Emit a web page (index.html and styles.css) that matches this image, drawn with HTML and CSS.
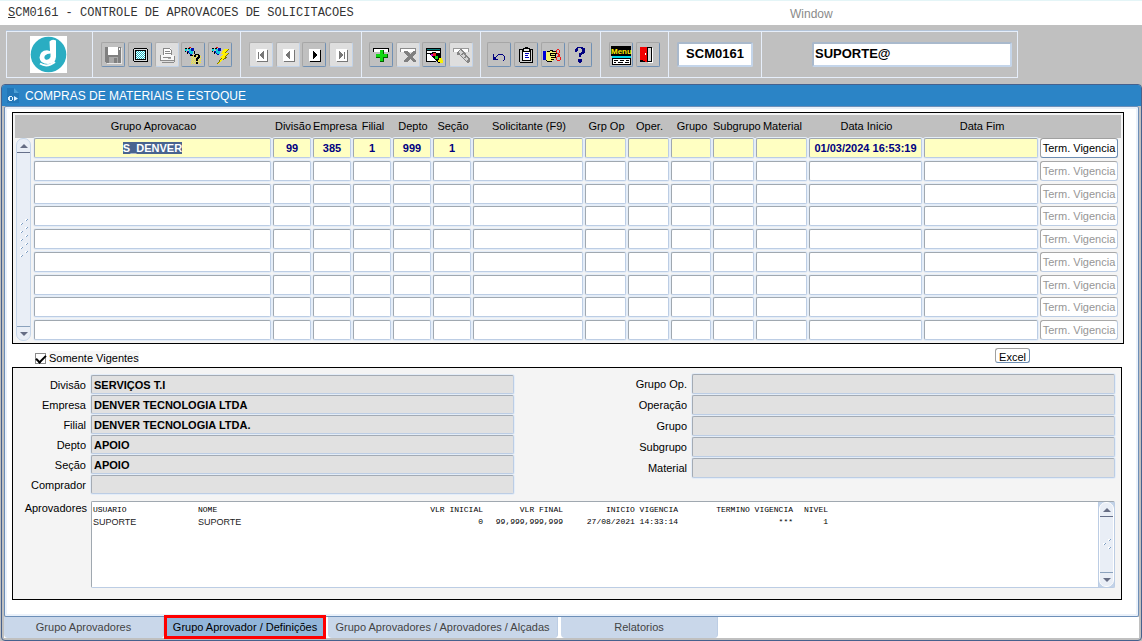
FILE: index.html
```html
<!DOCTYPE html>
<html lang="pt-BR">
<head>
<meta charset="utf-8">
<title>SCM0161 - Controle de Aprovacoes de Solicitacoes</title>
<link rel="stylesheet" href="styles.css">
</head>
<body>
<header class="menubar">
  <h1 class="menubar__title"><u>S</u>CM0161 - CONTROLE DE APROVACOES DE SOLICITACOES</h1>
  <span class="menubar__window">Window</span>
</header>

<div class="toolbar">
  <div class="toolbar__frame">
    <div class="group group--logo">
      <svg class="logo" viewBox="0 0 37 37" role="img" aria-label="Denver">
        <rect width="37" height="37" fill="#fff"/>
        <circle cx="18.500" cy="18.500" r="17.800" fill="#2aadc2"/>
        <path d="M19.500 5.500Q22 2.500 26 4.500V21Q25.500 28 18 28Q10 28 9.500 21.500Q10 14.500 17 14.200L20 15Z" fill="#fff"/>
        <path d="M15 19.500Q17 17.500 20.500 17.500V21Q19 24.500 15.500 23.500Q13.500 22 15 19.500Z" fill="#2aadc2"/>
        <path d="M10 27.500Q17 32 25 26" fill="none" stroke="#fff" stroke-width="2"/>
      </svg>
    </div>
    <div class="group group--file">
      <button class="tool" type="button" aria-label="Salvar"><svg viewBox="1 1 22 22">
        <path d="M4 4h16v16H5l-1-1z" fill="#808080"/><path d="M7 4h10v8H7z" fill="#fff"/><path d="M8 14h9v6H8z" fill="#a8a8a8"/><path d="M13 15h3v5h-3z" fill="#808080"/><path d="M18 5h1v2h-1z" fill="#fff"/><path d="M20 5h1v16H6v-1h14z" fill="#e8e8e8"/>
      </svg></button>
      <button class="tool" type="button" aria-label="Tela"><svg viewBox="1 1 22 22">
        <defs><pattern id="dither" width="2" height="2" patternUnits="userSpaceOnUse"><path d="M0 0h2v2H0z" fill="#fff"/><path d="M0 0h1v1H0zM1 1h1v1H1z" fill="#19b9c6"/></pattern>
        <pattern id="spark" width="2" height="2" patternUnits="userSpaceOnUse"><path d="M0 0h1v1H0zM1 1h1v1H1z" fill="#f4ea30"/></pattern></defs>
        <path d="M6 5h13v1h1v13H6v-1H5V6h1z" fill="#000"/><path d="M6 6h13v12H6z" fill="#d8dcde"/><path d="M7 7h11v10H7z" fill="#000"/><path d="M8 8h9v8H8z" fill="url(#dither)"/>
      </svg></button>
      <button class="tool tool--off" type="button" aria-label="Imprimir"><svg viewBox="1 1 22 22">
        <path d="M8 5h8v7H8z" fill="#fff"/><path d="M8 5h7v1H8zM8 5h1v7H8zM10 8h5v1h-5zM10 10h6v1h-6zM15 6h1v1h-1zM16 7h1v5h-1z" fill="#888"/><path d="M5 12h14v6H5z" fill="#f7f7f7"/><path d="M5 12h1v6H5zM6 17h13v1H6zM19 13h1v6h-1zM7 19h12v1H7zM8 14h8v1H8z" fill="#8b8b8b"/><path d="M13 15h3v1h-3z" fill="#aaa"/>
      </svg></button>
      <button class="tool" type="button" aria-label="Consultar"><svg viewBox="1 1 22 22">
        <path d="M10 12h10v9H10z" fill="url(#spark)"/>
        <path d="M4 6h2v2H4z" fill="#00e0e0"/><path d="M5 8h3l3 4H9zM10 5h3v3h-3z" fill="#0010b0"/><path d="M7 6h3v2h2v3h-3z" fill="#10c8dc"/><path d="M7 5h2v1H7zM4 5h2v1H4zM4 8h1v1H4zM6 9h1v2H6zM13 8h1v3h-1zM9 12h3v1H9z" fill="#000"/><path d="M8 4h2v1H8z" fill="#e01010"/>
        <path d="M14 11h4v1h-4zM13 12h2v2h-2zM17 12h2v3h-2zM16 14h2v2h-2zM15 15h2v3h-2zM15 19h2v2h-2z" fill="#000"/>
      </svg></button>
      <button class="tool" type="button" aria-label="Executar consulta"><svg viewBox="1 1 22 22">
        <path d="M4 6h2v2H4z" fill="#00e0e0"/><path d="M5 8h3l3 4H9zM10 5h3v3h-3z" fill="#0010b0"/><path d="M7 6h3v2h2v3h-3z" fill="#10c8dc"/><path d="M7 5h2v1H7zM4 5h2v1H4zM4 8h1v1H4zM6 9h1v2H6z" fill="#000"/><path d="M8 4h2v1H8z" fill="#e01010"/>
        <path d="M17 6h4l-3 4h3l-3 4h2L9 21l4-6h-2l4-4h-2z" fill="#7a7000"/><path d="M16 6h4l-4 4h4l-4 4h2l-8 7 4-6h-3l4-4h-2z" fill="#fff000"/>
      </svg></button>
    </div>
    <div class="group group--nav">
      <button class="tool tool--off" type="button" aria-label="Primeiro"><svg viewBox="1 1 22 22"><path d="M7 6h11v12H7z" fill="#fff"/><path d="M18 7h1v12H8v-1h10z" fill="#777"/><path d="M9 9h1v7H9zM15 8v8h-1v-1h-1v-1h-1v-1h-1v-2h1v-1h1V9h1V8z" fill="#777"/></svg></button>
      <button class="tool tool--off" type="button" aria-label="Anterior"><svg viewBox="1 1 22 22"><path d="M7 6h11v12H7z" fill="#fff"/><path d="M18 7h1v12H8v-1h10z" fill="#777"/><path d="M14 8v8h-1v-1h-1v-1h-1v-1h-1v-2h1v-1h1V9h1V8z" fill="#777"/></svg></button>
      <button class="tool" type="button" aria-label="Proximo"><svg viewBox="1 1 22 22"><path d="M7 6h11v12H7z" fill="#fff"/><path d="M18 7h1v12H8v-1h10z" fill="#000"/><path d="M11 8v8h1v-1h1v-1h1v-1h1v-2h-1v-1h-1V9h-1V8z" fill="#000"/></svg></button>
      <button class="tool tool--off" type="button" aria-label="Ultimo"><svg viewBox="1 1 22 22"><path d="M7 6h11v12H7z" fill="#fff"/><path d="M18 7h1v12H8v-1h10z" fill="#777"/><path d="M15 9h1v7h-1zM10 8v8h1v-1h1v-1h1v-1h1v-2h-1v-1h-1V9h-1V8z" fill="#777"/></svg></button>
    </div>
    <div class="group group--edit">
      <button class="tool" type="button" aria-label="Inserir"><svg viewBox="1 1 22 22"><path d="M4 5h16v4H4z" fill="#000"/><path d="M5 6h14v3H5z" fill="#fff"/><path d="M11 7h4v4h4v4h-4v4h-4v-4H7v-4h4z" fill="#006000"/><path d="M11 7h3v4h4v3h-4v4h-3v-4H7v-3h4z" fill="#12d812"/></svg></button>
      <button class="tool tool--off" type="button" aria-label="Excluir"><svg viewBox="1 1 22 22"><path d="M4 5h16v4H4z" fill="#8a8a8a"/><path d="M5 6h14v3H5z" fill="#fff"/><path d="M8 8h3l3 3 3-3h3v2l-4 4 4 3v2h-3l-3-3-3 3H8v-2l4-3-4-4z" fill="#808080"/></svg></button>
      <button class="tool" type="button" aria-label="Localizar"><svg viewBox="1 1 22 22"><path d="M4 5h15v10H4z" fill="#000"/><path d="M5 6h13v1H5z" fill="#087878"/><path d="M5 8h13v2H5z" fill="#fff"/><path d="M5 11h11v7H5z" fill="#fff"/><path d="M4 14h1v5H4zM5 18h9v1H5z" fill="#000"/><path d="M8 11l3-2h3l6 8-3 3-8-7z" fill="#000"/><path d="M9 11h2v2H9z" fill="#d000d0"/><path d="M11 10h3v3h-3z" fill="#e82020"/><path d="M13 13h3v3h-3z" fill="#10d020"/><path d="M17 15h3v2h1v3h-3v-1h-2v-2h1z" fill="#f8f000"/></svg></button>
      <button class="tool tool--off" type="button" aria-label="Cancelar consulta"><svg viewBox="1 1 22 22"><path d="M4 5h16v4H4z" fill="#999"/><path d="M5 6h14v3H5z" fill="#fff"/><path d="M8 9l3-3h2l8 10v3l-3 1-7-8H8z" fill="#868686"/><path d="M9 9l3-2 7 9-2 2-6-7z" fill="#d4d4d4"/><path d="M12 12l3-2M15 15l3-2" stroke="#868686"/></svg></button>
    </div>
    <div class="group group--help">
      <button class="tool" type="button" aria-label="Desfazer"><svg viewBox="1 1 22 22"><path d="M6 11h1v4h1v1h3v1H6zM8 14h1v1H8zM9 13h1v1H9zM10 12h1v1h-1zM11 11h5v1h-5zM16 12h1v1h-1zM17 13h1v4h-1zM16 17h1v1h-1zM7 14h2v2H7z" fill="#000080"/></svg></button>
      <button class="tool" type="button" aria-label="Copiar"><svg viewBox="1 1 22 22"><path d="M5 6h4V5h2V4h3v1h2v1h3v14H6l-1-1z" fill="#000"/><path d="M6 7h12v12H6z" fill="#d0d0d0"/><path d="M8 7h9v11H8z" fill="#000"/><path d="M9 9h7v8H9z" fill="#fff"/><path d="M10 6h5v2h-5z" fill="#e8e8e8"/><path d="M11 10h4v1h-4zM11 12h3v1h-3zM11 14h4v1h-4z" fill="#0000c0"/></svg></button>
      <button class="tool" type="button" aria-label="Recortar"><svg viewBox="1 1 22 22"><path d="M2 8h3v9H2z" fill="#0000d8"/><path d="M6 9h3V8h5v1h2v2h-2v5h-2v2H6l-1-1V9z" fill="#f4f070"/><path d="M6 8h3v1H6zM9 7h3v1H9zM11 8h4v1h-4zM9 10h7v1H9zM10 12h5v1h-5zM10 14h4v1h-4zM10 16h3v1h-3zM6 18h5v1H6zM5 17h1v1H5zM14 11h1v4h-1zM9 11h1v2H9z" fill="#000"/><path d="M16 6h2v1h-2zM15 7h1v3h-1zM18 7h1v3h-1zM16 10h2v1h-2zM16 13h3v1h-3zM15 14h1v3h-1zM19 14h1v3h-1zM16 17h3v1h-3zM17 11h2v2h-2z" fill="#f01818"/></svg></button>
      <button class="tool" type="button" aria-label="Ajuda"><svg viewBox="1 1 22 22"><path d="M9 4h6v1h2v5h-1v1h-2v1h-1v2h-2v-4h2V9h1V6h-1V5h-3v3H9v1H7V6h1V5h1zM10 16h4v3h-1v1h-2v-1h-1z" fill="#000080"/></svg></button>
    </div>
    <div class="group group--exit">
      <button class="tool" type="button" aria-label="Menu"><svg viewBox="1 1 22 22"><path d="M2 3h20v10H2z" fill="#000"/><text class="tool__word" x="2" y="11">Menu</text><path d="M3 13h19v2H3z" fill="#00d8e8"/><path d="M3 15h19v7H3z" fill="#000"/><path d="M4 16h17v5H4z" fill="#fff"/><path d="M5 17h4v1H5zM11 17h4v1h-4zM17 17h3v1h-3zM5 19h2v1H5zM9 19h5v1H9zM16 19h4v1h-4z" fill="#000"/></svg></button>
      <button class="tool" type="button" aria-label="Sair"><svg viewBox="1 1 22 22"><path d="M4 4h12v15H4z" fill="#000"/><path d="M11 5h4v13h-4z" fill="#d8d8d8"/><path d="M4 4h7v15H9v-1H7v-1H4z" fill="#f00000"/><path d="M11 4h1v15h-1z" fill="#000"/><path d="M9 10h1v2H9z" fill="#fff"/><path d="M16 5h1v15h-5v-1h4z" fill="#fff"/></svg></button>
    </div>
    <div class="group group--code"><input class="field field--code" aria-label="Programa" value="SCM0161"></div>
    <div class="group group--user"><input class="field field--user" aria-label="Usuario" value="SUPORTE@"></div>
  </div>
</div>

<main class="window">
  <div class="window__title">
    <svg class="window__icon" viewBox="0 0 12 15" aria-hidden="true"><path d="M0 0h7l5 5v10H0z" fill="#2377b8"/><path d="M7 0l5 5H7z" fill="#4c9fd6"/><path d="M2 8h3v1H3v3h2v1H2v-1H1V9h1zM5 9h1v3H5zM7 8l4 2.500-4 2.500z" fill="#dff1ff"/></svg>
    <h2>COMPRAS DE MATERIAIS E ESTOQUE</h2>
  </div>
  <div class="canvas">
    <section class="frame frame--grid" aria-label="Grupos">
      <table class="grid">
        <colgroup><col class="c-scroll"><col class="c-name"><col class="c-code" span="5"><col class="c-request"><col class="c-mid"><col class="c-mid"><col class="c-group"><col class="c-mid"><col class="c-material"><col class="c-start"><col class="c-end"><col class="c-action"></colgroup>
        <thead><tr>
          <td></td><th>Grupo Aprovacao</th><th>Divisão</th><th>Empresa</th><th>Filial</th><th>Depto</th><th>Seção</th><th>Solicitante (F9)</th><th>Grp Op</th><th>Oper.</th><th>Grupo</th><th>Subgrupo</th><th>Material</th><th>Data Inicio</th><th>Data Fim</th><td></td>
        </tr></thead>
        <tbody id="rows"></tbody>
      </table>
    </section>

    <div class="options">
      <label class="check"><input type="checkbox" checked><span>Somente Vigentes</span></label>
      <button class="push push--excel" type="button">Excel</button>
    </div>

    <section class="frame frame--detail" aria-label="Detalhes">
      <div class="details">
        <div class="fields fields--left">
          <label for="divisao">Divisão</label><input class="field field--read" id="divisao" readonly value="SERVIÇOS T.I">
          <label for="empresa">Empresa</label><input class="field field--read" id="empresa" readonly value="DENVER TECNOLOGIA LTDA">
          <label for="filial">Filial</label><input class="field field--read" id="filial" readonly value="DENVER TECNOLOGIA LTDA.">
          <label for="depto">Depto</label><input class="field field--read" id="depto" readonly value="APOIO">
          <label for="secao">Seção</label><input class="field field--read" id="secao" readonly value="APOIO">
          <label for="comprador">Comprador</label><input class="field field--read" id="comprador" readonly>
        </div>
        <div class="fields fields--right">
          <label for="grupoop">Grupo Op.</label><input class="field field--read" id="grupoop" readonly>
          <label for="operacao">Operação</label><input class="field field--read" id="operacao" readonly>
          <label for="grupo">Grupo</label><input class="field field--read" id="grupo" readonly>
          <label for="subgrupo">Subgrupo</label><input class="field field--read" id="subgrupo" readonly>
          <label for="material">Material</label><input class="field field--read" id="material" readonly>
        </div>
      </div>
      <div class="approvers">
        <span class="approvers__label" id="aprovadores">Aprovadores</span>
        <div class="list">
          <div class="list__body">
            <table class="report" aria-labelledby="aprovadores">
              <colgroup><col class="r-user"><col class="r-name"><col class="r-first"><col class="r-last"><col class="r-from"><col class="r-to"><col class="r-level"></colgroup>
              <thead><tr><th>USUARIO</th><th>NOME</th><th class="num">VLR INICIAL</th><th class="num">VLR FINAL</th><th class="num">INICIO VIGENCIA</th><th class="num">TERMINO VIGENCIA</th><th class="num">NIVEL</th></tr></thead>
              <tbody><tr><td class="plain">SUPORTE</td><td class="plain">SUPORTE</td><td class="num">0</td><td class="num">99,999,999,999</td><td class="num">27/08/2021 14:33:14</td><td class="num">***</td><td class="num">1</td></tr></tbody>
            </table>
          </div>
          <div class="scroll scroll--list">
            <button class="scroll__end" type="button" aria-label="Subir"><i class="tri tri--up"></i></button>
            <svg class="grip" viewBox="0 0 10 14" aria-hidden="true"><path d="M1 5h2v2H1zM6 1h2v2H6zM6 9h2v2H6z" fill="#fff"/><path d="M2 6h1v1H2zM3 5h1v1H3zM7 2h1v1H7zM8 1h1v1H8zM7 10h1v1H7zM8 9h1v1H8z" fill="#7f9fc4"/></svg>
            <button class="scroll__end scroll__end--down" type="button" aria-label="Descer"><i class="tri tri--down"></i></button>
          </div>
        </div>
      </div>
    </section>
  </div>
  <nav class="tabs">
    <button class="tab tab--first" type="button">Grupo Aprovadores</button>
    <button class="tab tab--active" type="button">Grupo Aprovador / Definições</button>
    <button class="tab tab--levels" type="button">Grupo Aprovadores / Aprovadores / Alçadas</button>
    <button class="tab tab--reports" type="button">Relatorios</button>
  </nav>
</main>
<script src="app.js"></script>
</body>
</html>
```
FILE: styles.css
```css
* { box-sizing: border-box; }
html, body { height: 100%; }
body {
  margin: 0;
  display: flex;
  flex-direction: column;
  background: #c0c0c0;
  color: #000;
  font: 11px/14px "Liberation Sans", Arial, sans-serif;
}
button, input { font: inherit; color: inherit; margin: 0; padding: 0; }
h1, h2 { margin: 0; font-weight: normal; }

.menubar {
  flex: none;
  display: grid;
  grid-template-columns: 69% 1fr;
  align-items: center;
  height: 25px;
  border-top: 1px solid #e4f5f7;
  background: #fff;
}
.menubar__title { padding-left: 8px; font: 12px/14px "Liberation Mono", monospace; color: #333; }
.menubar__window { padding: 2px 0 0 2px; font-size: 12px; color: #8a8a8a; }

.toolbar { flex: none; height: 59px; padding: 6px 124px 6px 6px; }
.toolbar__frame {
  display: flex;
  height: 47px;
  border: 1px solid #e6eefa;
  box-shadow: 0 -1px #b4c4d8;
}
.group {
  display: flex;
  align-items: center;
  justify-content: space-between;
  padding: 0 8px;
  border-right: 1px solid #e6eefa;
}
.group--logo { width: 86px; padding: 0 10px 0 8px; justify-content: center; }
.group--file { width: 148px; }
.group--nav { width: 121px; }
.group--edit { width: 119px; padding: 0 7px; }
.group--help { width: 120px; padding: 0 8px 0 6px; }
.group--exit { width: 68px; }
.group--code { width: 93px; }
.group--user { flex: 1; padding: 0 5px 0 50px; border-right: 0; }
.logo { width: 37px; height: 37px; }

.tool {
  width: 24px;
  height: 25px;
  display: block;
  border: 1px solid;
  border-color: #a6a6a6 #7090b4 #7090b4 #a6a6a6;
  border-radius: 2px;
  background: #c0c0c0;
}
.tool svg { display: block; width: 22px; height: 22px; shape-rendering: crispEdges; }
.tool--off { background: #dedede; border-color: #b0b0b0 #c2d3e8 #c2d3e8 #b0b0b0; }
.tool__word { font: bold 8px "Liberation Sans", Arial, sans-serif; fill: #fff000; }

.field {
  display: block;
  width: 100%;
  height: 20px;
  border: 1px solid;
  border-color: #a0a8b0 #bccde4 #bccde4 #a0a8b0;
  border-radius: 2px;
  outline: 0;
  background: #fff;
  font-weight: bold;
}
.field--code, .field--user { height: 25px; padding-bottom: 2px; border-width: 2px; border-color: #a9b9cc #c4d5ea #c4d5ea #a9b9cc; font-size: 13px; }
.field--code { text-align: center; }
.field--user { padding-left: 1px; }
.field::selection { background: #49648f; color: #fff; }

.window {
  flex: 1;
  display: flex;
  flex-direction: column;
  margin-left: 1px;
  padding: 0 2px 2px;
  border: 1px solid #46618d;
  border-radius: 4px;
  background: #c0c0c0;
}
.window__title {
  display: flex;
  align-items: center;
  gap: 6px;
  height: 21px;
  margin: 0 -2px;
  padding-left: 5px;
  border-radius: 3px 3px 0 0;
  background: #2b84c6;
  color: #fff;
}
.window__title h2 { font-size: 12px; line-height: 16px; }
.window__icon { width: 12px; height: 15px; }

.canvas {
  flex: 1;
  padding: 5px 14px 15px 7px;
  border: 1px solid #6d8fb8;
  border-radius: 2px;
  box-shadow: inset 0 0 0 2px #eaf1fa;
  background: #fff;
}
.frame { border: 1px solid #000; background: #f4f4f4; }
.frame--grid { padding: 2px 2px 0; }

.grid { width: 100%; height: 228px; border-collapse: collapse; table-layout: fixed; }
.grid th, .grid td { padding: 0; font-weight: normal; white-space: nowrap; }
.grid thead tr { height: 23px; background: #c0c0c0; }
.grid td { vertical-align: top; padding-right: 2px; }
.grid thead th { padding-bottom: 2px; }
.c-scroll { width: 19px; }
.c-code { width: 40px; }
.c-request { width: 112px; }
.c-mid { width: 43px; }
.c-group { width: 42px; }
.c-material { width: 53px; }
.c-start { width: 115px; }
.c-end { width: 116px; }
.c-action { width: 81px; }
.grid .field { text-align: center; color: #000080; box-shadow: 0 0 0 1px #e4edf8; }
.grid .is-current .field { background: #ffffc2; }
.grid .scroll-cell { height: 1px; padding: 0 3px 2px 1px; }

.push {
  display: block;
  border: 1px solid;
  border-color: #a0a0a0 #6d8db2 #6d8db2 #a0a0a0;
  border-radius: 3px;
  background: #fff;
  text-align: center;
  white-space: nowrap;
}
.push:disabled { color: #969696; border-color: #a8a8a8 #bccde4 #bccde4 #a8a8a8; }
.push--row { width: 78px; height: 20px; }
.push--excel { width: 35px; height: 15px; line-height: 16px; overflow: hidden; }

.scroll {
  display: flex;
  flex-direction: column;
  justify-content: space-between;
  align-items: center;
  width: 15px;
  height: 100%;
  border: 1px solid #c6d6ea;
  border-radius: 7px;
  background: #e9eef6;
}
.scroll__end {
  display: flex;
  align-items: center;
  justify-content: center;
  width: 13px;
  height: 14px;
  border: 0;
  border-bottom: 1px solid #66708a;
  background: transparent;
}
.scroll__end--down { border-bottom: 0; border-top: 1px solid #8ba2bd; }
.scroll--list { border-color: #fff; }
.tri { border: 4px solid transparent; }
.tri--up { border-top: 0; border-bottom-color: #666d84; }
.tri--down { border-bottom: 0; border-top-color: #666d84; }
.grip { width: 10px; }

.options {
  display: flex;
  justify-content: space-between;
  height: 23px;
  padding: 4px 94px 0 23px;
}
.check { display: flex; align-items: center; gap: 3px; height: 20px; }
.check span { background: #f7f7f7; }
.check input {
  appearance: none;
  width: 11px;
  height: 11px;
  border: 1px solid #8c8c8c;
  background: #fff;
}
.check input:checked::before {
  content: "";
  display: block;
  width: 8px;
  height: 4px;
  margin: 1px 0;
  border: solid #000;
  border-width: 0 0 2px 2px;
  transform: rotate(-45deg);
}

.frame--detail { margin-right: 2px; padding: 6px 6px 11px; }
.details { display: grid; grid-template-columns: 495px 1fr; }
.fields { display: grid; column-gap: 5px; align-content: start; align-items: center; text-align: right; }
.fields--left { grid-template-columns: 67px 423px; row-gap: 1px; padding-top: 1px; }
.fields--right { grid-template-columns: 173px 1fr; row-gap: 1px; }
.field--read { background: #e1e1e1; padding-left: 2px; border-color: #a4abb4 #bccde4 #bccde4 #a4abb4; box-shadow: 0 0 0 1px #e4edf8; }
.fields--left .field { height: 19px; }
.approvers { display: grid; grid-template-columns: 68px 1fr; column-gap: 4px; margin-top: 7px; text-align: right; }
.list {
  display: flex;
  height: 87px;
  border: 1px solid;
  border-color: #a0a8b0 #bccde4 #bccde4 #a0a8b0;
  border-radius: 2px;
  background: #c3d3e8;
  text-align: left;
}
.list__body { flex: 1; padding: 2px 1px; background: #fff; border-right: 1px solid #bccde4; }
.report { width: 735px; border-collapse: collapse; table-layout: fixed; font: 8px/12px "Liberation Mono", monospace; }
.report th, .report td { height: 12px; padding: 0; font-weight: normal; text-align: left; white-space: nowrap; }
.report .num { text-align: right; }
.report .plain { font: 9px/12px "Liberation Sans", Arial, sans-serif; color: #222; }
.r-user, .r-name { width: 105px; }
.r-first { width: 180px; }
.r-last { width: 80px; }
.r-from, .r-to { width: 115px; }

.tabs { flex: none; display: flex; height: 21px; background: #fff; }
.tab {
  height: 21px;
  padding-bottom: 1px;
  border: 0;
  border-right: 1px solid #bccde4;
  border-radius: 0 0 4px 4px;
  background: #c9d7ea;
  color: #444;
  white-space: nowrap;
}
.tab--first { width: 160px; }
.tab--active {
  position: relative;
  width: 158px;
  height: 20px;
  margin: 0 4px 0 2px;
  padding: 0;
  border: 0;
  border-radius: 0;
  outline: 3px solid #f00;
  outline-offset: -1px;
  background: #92b6da;
  color: #000;
}
.tab--levels { width: 230px; }
.tab--reports { width: 157px; margin-left: 3px; }
```
FILE: app.js
```js
const columns = ["Grupo Aprovacao", "Divisão", "Empresa", "Filial", "Depto", "Seção", "Solicitante", "Grp Op", "Oper.", "Grupo", "Subgrupo", "Material", "Data Inicio", "Data Fim"];
const records = [["S_DENVER", "99", "385", "1", "999", "1", "", "", "", "", "", "", "01/03/2024 16:53:19", ""]];
const visibleRows = 9;

const scrollbar = `<td class="scroll-cell" rowspan="${visibleRows}"><div class="scroll">
  <button class="scroll__end" type="button" aria-label="Subir"><i class="tri tri--up"></i></button>
  <svg class="grip" viewBox="0 0 10 44" aria-hidden="true">${[0, 8, 16, 24, 32].map(y => `<path d="M1 ${y + 5}h2v2H1zM6 ${y + 1}h2v2H6z" fill="#fff"/><path d="M2 ${y + 6}h1v1H2zM3 ${y + 5}h1v1H3zM7 ${y + 2}h1v1H7zM8 ${y + 1}h1v1H8z" fill="#7f9fc4"/>`).join("")}</svg>
  <button class="scroll__end scroll__end--down" type="button" aria-label="Descer"><i class="tri tri--down"></i></button>
</div></td>`;

let html = "";
for (let r = 0; r < visibleRows; r++) {
  const record = records[r];
  html += `<tr class="${record ? "is-current" : ""}">${r === 0 ? scrollbar : ""}`;
  columns.forEach((name, c) => {
    html += `<td><input class="field" aria-label="${name} ${r + 1}" value="${record ? record[c] : ""}"></td>`;
  });
  html += `<td><button class="push push--row" type="button" ${record ? "" : "disabled"}>Term. Vigencia</button></td></tr>`;
}
document.getElementById("rows").innerHTML = html;

const current = document.querySelector(".is-current .field");
current.focus();
current.select();
```
